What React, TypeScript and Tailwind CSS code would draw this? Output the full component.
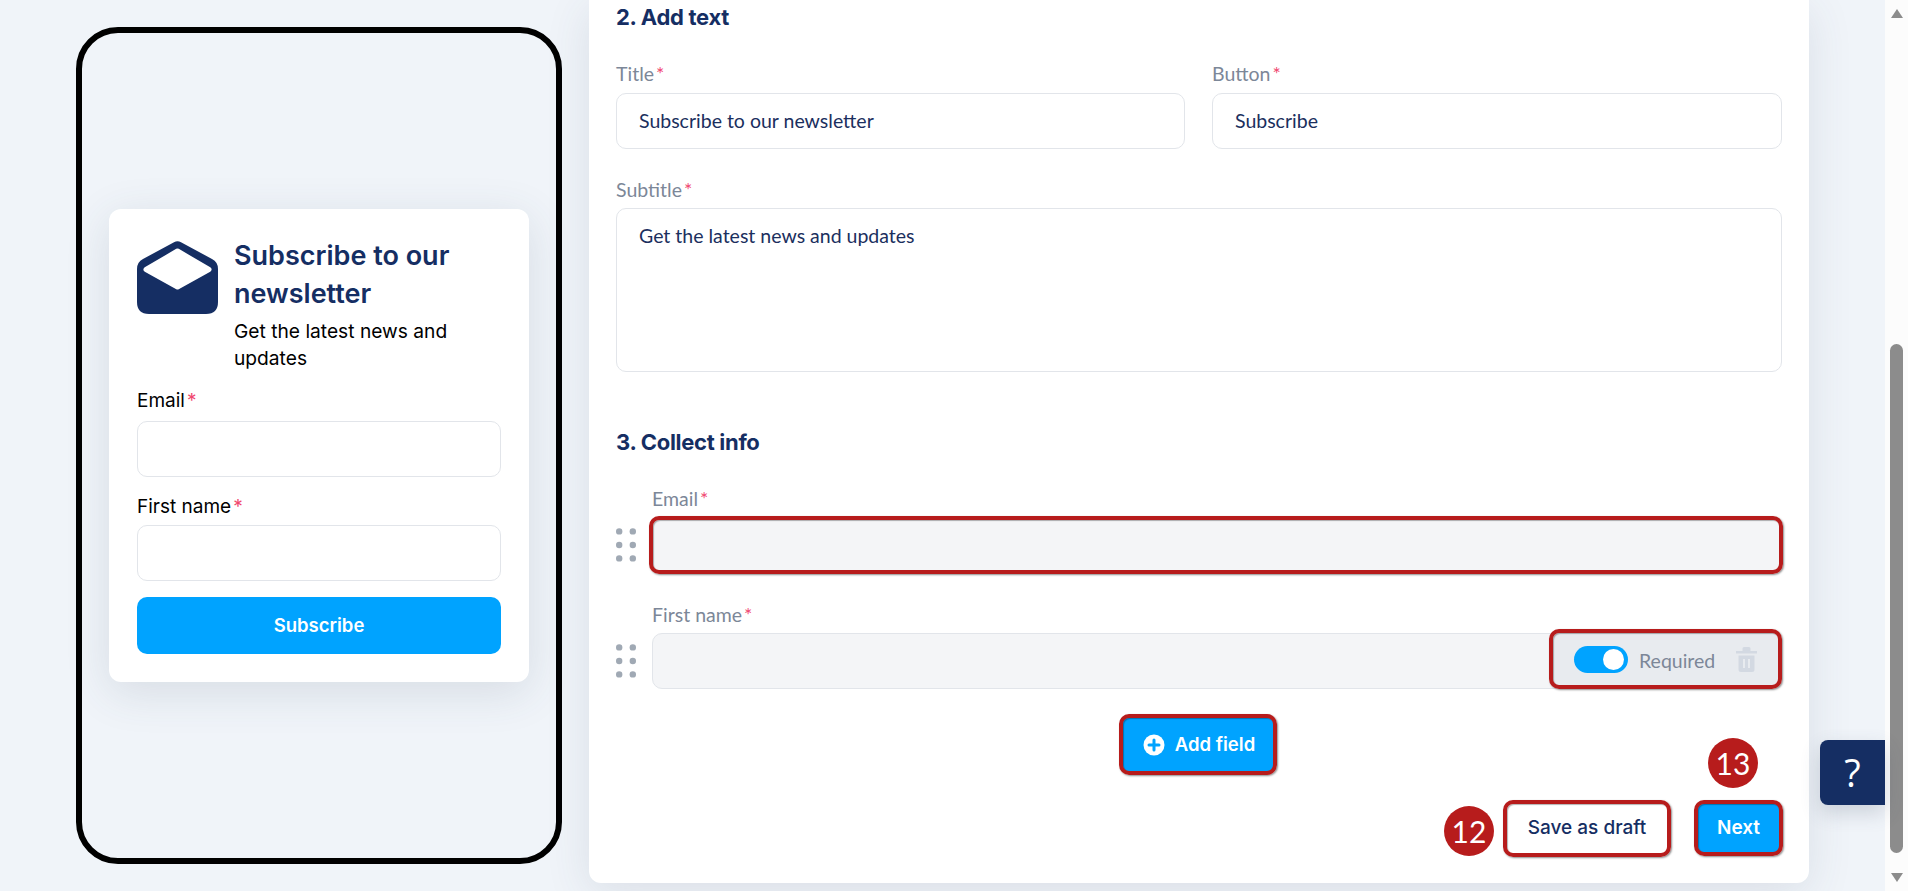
const inter = "font-['Inter',sans-serif]";
const body = "font-['Lato',sans-serif]";

function Star() {
  return <span className="text-[#f0476f] ml-[2px]">*</span>;
}

function Highlight({ className = "" }: { className?: string }) {
  return (
    <div
      className={`absolute -inset-[2px] border-4 border-[#b71c1c] rounded-[10px] shadow-[1px_1px_2px_rgba(0,0,0,0.45),inset_1px_1px_1px_rgba(0,0,0,0.3)] pointer-events-none ${className}`}
    />
  );
}

function Badge({ n, className }: { n: string; className: string }) {
  return (
    <div
      className={`absolute w-[50px] h-[50px] rounded-full bg-[#b71c1c] text-white font-normal flex items-center justify-center text-[30px] ${body} ${className}`}
    >
      {n}
    </div>
  );
}

function FieldLabel({ children }: { children: string }) {
  return (
    <label className={`block h-6 leading-6 text-[19.5px] text-[#7c8798] ${body}`}>
      {children}
      <Star />
    </label>
  );
}

function TextInput({ value }: { value: string }) {
  return (
    <div className="mt-[7px] h-14 rounded-[10px] border border-[#e2e5ea] bg-white px-[22px] flex items-center text-[19.5px] text-[#1b2f5e]">
      {value}
    </div>
  );
}

function DragDots() {
  return (
    <svg width="20" height="34" viewBox="0 0 20 34" className="shrink-0 fill-[#a0a9b4]">
      <circle cx="3.2" cy="3.4" r="3.2" />
      <circle cx="16.8" cy="3.4" r="3.2" />
      <circle cx="3.2" cy="17" r="3.2" />
      <circle cx="16.8" cy="17" r="3.2" />
      <circle cx="3.2" cy="30.4" r="3.2" />
      <circle cx="16.8" cy="30.4" r="3.2" />
    </svg>
  );
}

function EnvelopeIcon() {
  return (
    <svg width="81" height="73" viewBox="0 0 81 73" className="shrink-0">
      <path
        d="M37 1.2 Q40.5 -0.6 44 1.2 L75 18 Q81 21 81 28 L81 61 Q81 73 69 73 L12 73 Q0 73 0 61 L0 28 Q0 21 6 18 Z"
        fill="#152e63"
      />
      <path
        d="M40.5 10 L72 28.5 L40.5 46 L9 28.5 Z"
        fill="#fff"
        stroke="#fff"
        strokeWidth="5"
        strokeLinejoin="round"
      />
    </svg>
  );
}

function TrashIcon() {
  return (
    <svg width="21" height="25" viewBox="0 0 21 25" className="shrink-0">
      <path d="M0 4 H6.5 V1.5 Q6.5 0 8 0 H13 Q14.5 0 14.5 1.5 V4 H21 V6.5 H0 Z" fill="#d3d9e2" />
      <path
        d="M2.5 8.5 H18.5 V22.5 Q18.5 25 16 25 H5 Q2.5 25 2.5 22.5 Z M7 12 V21 H9 V12 Z M12 12 V21 H14 V12 Z"
        fill="#d3d9e2"
        fillRule="evenodd"
      />
    </svg>
  );
}

function PhonePreview() {
  return (
    <div className="w-[486px] h-[837px] rounded-[42px] border-[6px] border-black flex items-center justify-center">
      <div className={`w-[420px] h-[473px] bg-white rounded-[12px] px-7 pt-8 shadow-[0_10px_45px_rgba(60,75,100,0.14)] ${inter}`}>
        <div className="flex gap-4 items-start">
          <EnvelopeIcon />
          <div className="-mt-[4px]">
            <h2 className="text-[27px] leading-[37.5px] font-semibold text-[#152e63]">
              Subscribe to our newsletter
            </h2>
            <p className="text-[19.2px] leading-[27px] text-black mt-[6px]">Get the latest news and updates</p>
          </div>
        </div>
        <div className="text-[19px] leading-6 text-black mt-[17px]">
          Email
          <Star />
        </div>
        <div className="mt-[8px] h-14 rounded-[10px] border border-[#e2e5ea]" />
        <div className="text-[19px] leading-6 text-black mt-[18px]">
          First name
          <Star />
        </div>
        <div className="mt-[6px] h-14 rounded-[10px] border border-[#e2e5ea]" />
        <button className="mt-[16px] w-full h-[57px] rounded-[10px] bg-[#00a3ff] text-white text-[18.5px] font-semibold">
          Subscribe
        </button>
      </div>
    </div>
  );
}

function FormPanel() {
  return (
    <div className={`w-[1220px] h-[883px] bg-white rounded-b-[12px] pl-[27px] pr-[27px] pt-[3px] shadow-[0_10px_45px_rgba(60,75,100,0.12)] ${body}`}>
      <h3 className={`h-7 leading-7 text-[22px] font-bold tracking-[-0.3px] text-[#152e63] ${inter}`}>2. Add text</h3>

      <div className="mt-[31px] grid grid-cols-[569px_570px] gap-x-[27px]">
        <div>
          <FieldLabel>Title</FieldLabel>
          <TextInput value="Subscribe to our newsletter" />
        </div>
        <div>
          <FieldLabel>Button</FieldLabel>
          <TextInput value="Subscribe" />
        </div>
      </div>

      <div className="mt-[29px]">
        <FieldLabel>Subtitle</FieldLabel>
        <div className="mt-[6px] h-[164px] rounded-[10px] border border-[#e2e5ea] px-[22px] pt-[15px] text-[19.5px] leading-6 text-[#1b2f5e]">
          Get the latest news and updates
        </div>
      </div>

      <h3 className={`mt-[56px] h-7 leading-7 text-[22px] font-bold tracking-[-0.3px] text-[#152e63] ${inter}`}>3. Collect info</h3>

      <div className="mt-[31px] flex items-end gap-4">
        <div className="pb-[11px]">
          <DragDots />
        </div>
        <div className="flex-1">
          <FieldLabel>Email</FieldLabel>
          <div className="relative mt-[6px] h-14 rounded-[10px] bg-[#f4f5f7] border border-[#e2e5ea]">
            <Highlight className="-left-[4px]" />
          </div>
        </div>
      </div>

      <div className="mt-[30px] flex items-end gap-4">
        <div className="pb-[11px]">
          <DragDots />
        </div>
        <div className="flex-1">
          <FieldLabel>First name</FieldLabel>
          <div className="relative mt-[6px] h-14 rounded-[10px] bg-[#f4f5f7] border border-[#e2e5ea]">
            <div className="absolute right-[1px] -top-[3px] w-[229px] h-14 rounded-[8px] bg-[#e8ebef] flex items-center pl-[23px]">
              <Highlight />
              <div className="w-[54px] h-[27px] rounded-full bg-[#00a3ff] flex items-center justify-end pr-[4px]">
                <div className="w-[21px] h-[21px] rounded-full bg-white" />
              </div>
              <span className="ml-[11px] w-[77px] text-[19.5px] leading-6 text-[#7c8798] mt-[3px]">Required</span>
              <div className="ml-5">
                <TrashIcon />
              </div>
            </div>
          </div>
        </div>
      </div>

      <div className="mt-[27px] flex justify-center pr-[3px]">
        <button className={`relative w-[154px] h-[57px] rounded-[8px] bg-[#00a3ff] text-white text-[18.5px] font-semibold flex items-center justify-center gap-[10px] pl-[3px] ${inter}`}>
          <Highlight />
          <svg width="22" height="22" viewBox="0 0 22 22">
            <circle cx="11" cy="11" r="10.5" fill="#fff" />
            <path d="M11 6 V16 M6 11 H16" stroke="#00a3ff" strokeWidth="3" strokeLinecap="round" />
          </svg>
          Add field
        </button>
      </div>

      <div className="mt-[29px] flex justify-end gap-[27px] pr-[1px]">
        <button className={`relative w-[164px] h-[53px] rounded-[8px] bg-white text-[#152e63] text-[19px] font-medium ${inter}`}>
          <Highlight />
          <Badge n="12" className="-left-[61px] top-1" />
          Save as draft
        </button>
        <button className={`relative w-[85px] h-[52px] rounded-[8px] bg-[#00a3ff] text-white text-[19px] font-semibold ${inter}`}>
          <Highlight />
          <Badge n="13" className="left-3 -top-16" />
          Next
        </button>
      </div>
    </div>
  );
}

function Scrollbar() {
  return (
    <div className="w-[23px] h-full bg-[#fcfcfc] flex flex-col items-center shrink-0">
      <svg width="12" height="9" viewBox="0 0 12 9" className="mt-[9px] fill-[#8c8c8c]">
        <path d="M6 0 L12 9 H0 Z" />
      </svg>
      <div className="mt-[326px] w-[13px] h-[509px] rounded-full bg-[#8c8c8c]" />
      <svg width="12" height="9" viewBox="0 0 12 9" className="mt-[20px] fill-[#8c8c8c]">
        <path d="M0 0 H12 L6 9 Z" />
      </svg>
    </div>
  );
}

export default function App() {
  return (
    <div className="relative w-[1908px] h-[891px] overflow-hidden bg-[#f0f4f9] flex">
      <div className="w-[589px] shrink-0 pl-[76px] pt-[27px]">
        <PhonePreview />
      </div>
      <FormPanel />
      <div className="flex-1" />
      <Scrollbar />
      <button className="absolute left-[1820px] top-[740px] w-[65px] h-[65px] rounded-l-[8px] bg-[#152e63] text-white text-[38px] font-['Open_Sans',sans-serif] shadow-[0_8px_20px_rgba(60,75,100,0.2)]">
        ?
      </button>
    </div>
  );
}
